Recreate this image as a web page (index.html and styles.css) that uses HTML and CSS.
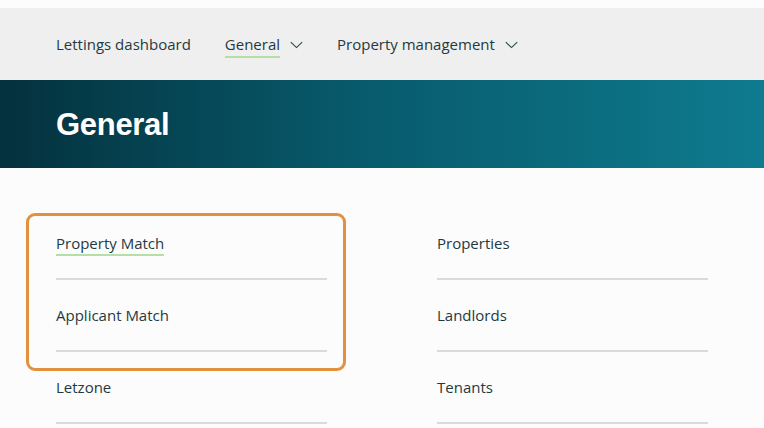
FILE: index.html
```html
<!DOCTYPE html>
<html>
<head>
<meta charset="utf-8">
<link rel="stylesheet" href="styles.css">
</head>
<body>
<div class="topstrip"></div>
<nav class="nav">
  <a class="nav-item">Lettings dashboard</a>
  <a class="nav-item dropdown"><span class="label active">General</span>
    <svg class="chev" width="13" height="8" viewBox="0 0 13 8"><path d="M0.8 1.2 L6.5 6.6 L12.2 1.2" fill="none" stroke="#2d4448" stroke-width="1.1"/></svg></a>
  <a class="nav-item dropdown"><span class="label">Property management</span>
    <svg class="chev" width="13" height="8" viewBox="0 0 13 8"><path d="M0.8 1.2 L6.5 6.6 L12.2 1.2" fill="none" stroke="#2d4448" stroke-width="1.1"/></svg></a>
</nav>
<header class="banner"><h1>General</h1></header>
<main class="content">
  <div class="grid">
    <div class="col">
      <div class="row"><span class="link active">Property Match</span></div>
      <div class="row"><span class="link">Applicant Match</span></div>
      <div class="row"><span class="link">Letzone</span></div>
    </div>
    <div class="col">
      <div class="row"><span class="link">Properties</span></div>
      <div class="row"><span class="link">Landlords</span></div>
      <div class="row"><span class="link">Tenants</span></div>
    </div>
    <div class="highlight"></div>
  </div>
</main>
</body>
</html>
```
FILE: styles.css
```css
html, body { margin: 0; padding: 0; }
body {
  background: #fcfcfc;
  font-family: "Open Sans", "Liberation Sans", sans-serif;
  color: #1f3a3f;
  width: 764px;
  height: 428px;
  overflow: hidden;
}
.topstrip { height: 8px; background: #fcfcfc; }
.nav {
  height: 72px;
  background: #efefef;
  display: flex;
  align-items: center;
  padding-left: 56px;
  gap: 34px;
  box-sizing: border-box;
}
.nav-item {
  font-size: 15px;
  color: #1f3a3f;
  display: flex;
  align-items: center;
  gap: 10px;
}
.label { position: relative; line-height: 20px; }
.label.active::after {
  content: "";
  position: absolute;
  left: 0; right: 0;
  bottom: -4px;
  height: 2px;
  background: #b4dfa6;
}
.chev { margin-top: 2px; }
.banner {
  height: 88px;
  background: linear-gradient(90deg, #04313d 0%, #07596a 45%, #0f7b8f 100%);
  display: flex;
  align-items: center;
  padding-left: 56px;
}
.banner h1 {
  margin: 0;
  color: #ffffff;
  font-family: "Liberation Sans", Arial, sans-serif;
  font-weight: bold;
  font-size: 31px;
  letter-spacing: -0.3px;
  padding-top: 2px;
}
.content { padding: 40px 0 0 56px; }
.grid {
  position: relative;
  display: grid;
  grid-template-columns: 271px 271px;
  column-gap: 110px;
}
.row {
  height: 72px;
  box-sizing: border-box;
  border-bottom: 2px solid #dadada;
  padding-top: 24px;
}
.link {
  position: relative;
  font-size: 15px;
  line-height: 22px;
  color: #1f3a3f;
  display: inline-block;
}
.link.active::after {
  content: "";
  position: absolute;
  left: 0; right: 0;
  bottom: -2px;
  height: 2px;
  background: #b4dfa6;
}
.highlight {
  position: absolute;
  left: -30px;
  top: 5px;
  width: 320px;
  height: 158px;
  box-sizing: border-box;
  border: 3px solid #e2913f;
  border-radius: 9px;
  pointer-events: none;
}
```
